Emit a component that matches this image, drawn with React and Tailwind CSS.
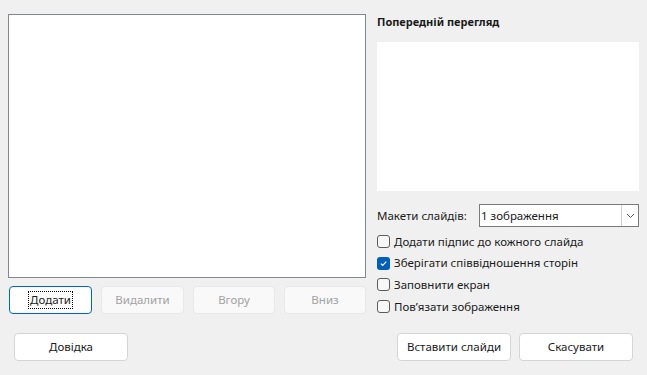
import React from "react";

const font = { fontFamily: '"Noto Sans", "Open Sans", sans-serif' };

function Btn({ children, className = "", disabled = false, focused = false }) {
  let cls =
    "flex items-center justify-center rounded-[4px] border text-[11.5px] h-[28px] " + className + " ";
  if (disabled) cls += "bg-[#f9f9f9] border-[#e8e8e8] text-[#a2a2a2]";
  else if (focused) cls += "bg-white border-[#0067c0] text-[#1a1a1a]";
  else cls += "bg-white border-[#d5d5d5] text-[#1a1a1a]";
  return (
    <div className={cls}>
      {focused ? (
        <span className="border border-dotted border-black px-px leading-[16px]">{children}</span>
      ) : (
        <span className="leading-[16px]">{children}</span>
      )}
    </div>
  );
}

function Check({ checked, label }) {
  return (
    <div className="flex items-center h-[21.6px]">
      {checked ? (
        <div className="w-[13px] h-[13px] rounded-[3px] bg-[#005fb8] flex items-center justify-center">
          <svg width="9" height="9" viewBox="0 0 9 9">
            <path d="M1.8 4.6 L3.7 6.4 L7.3 2.6" stroke="white" strokeWidth="1.2" fill="none" />
          </svg>
        </div>
      ) : (
        <div className="w-[13px] h-[13px] rounded-[3px] border border-[#5c5c5c] bg-[#f7f7f7]" />
      )}
      <span className="ml-[4px] text-[11.5px] text-[#1a1a1a] leading-[16px]">{label}</span>
    </div>
  );
}

export default function App() {
  return (
    <div className="w-[647px] h-[375px] bg-[#f0f0f0] flex flex-col" style={font}>
      <div className="flex pt-[14px] h-[314px]">
        <div className="flex flex-col ml-[8px] w-[358px]">
          <div className="h-[264px] bg-white border border-[#828790]" />
          <div className="flex gap-[9px] ml-px mt-[8px]">
            <Btn focused className="w-[83px]">Додати</Btn>
            <Btn disabled className="w-[83px]">Видалити</Btn>
            <Btn disabled className="w-[82px]">Вгору</Btn>
            <Btn disabled className="w-[82px]">Вниз</Btn>
          </div>
        </div>
        <div className="flex flex-col ml-[11px] w-[262px]">
          <div className="h-[16px] text-[11px] font-bold leading-[16px] text-[#1a1a1a]">
            Попередній перегляд
          </div>
          <div className="mt-[12px] h-[149px] shrink-0 bg-white" />
          <div className="mt-[13px] flex items-center h-[23px] shrink-0">
            <span className="text-[11.5px] text-[#1a1a1a] w-[102px] leading-[16px]">Макети слайдів:</span>
            <div className="flex-1 h-[23px] bg-white border border-[#7a7a7a] flex items-center">
              <span className="flex-1 pl-[1px] text-[11.5px] text-[#1a1a1a] leading-[16px]">1 зображення</span>
              <div className="w-[17px] h-full border-l border-[#d0d0d0] flex items-center justify-center">
                <svg width="9" height="6" viewBox="0 0 9 6">
                  <path d="M1 1 L4.5 4.5 L8 1" stroke="#555" strokeWidth="1" fill="none" />
                </svg>
              </div>
            </div>
          </div>
          <div className="mt-[4px] flex flex-col shrink-0">
            <Check label="Додати підпис до кожного слайда" />
            <Check checked label="Зберігати співвідношення сторін" />
            <Check label="Заповнити екран" />
            <Check label="Пов’язати зображення" />
          </div>
        </div>
      </div>
      <div className="flex mt-[19px]">
        <Btn className="ml-[14px] w-[114px]">Довідка</Btn>
        <div className="flex-1" />
        <Btn className="w-[114px]">Вставити слайди</Btn>
        <Btn className="ml-[8px] w-[114px] mr-[14px]">Скасувати</Btn>
      </div>
    </div>
  );
}
